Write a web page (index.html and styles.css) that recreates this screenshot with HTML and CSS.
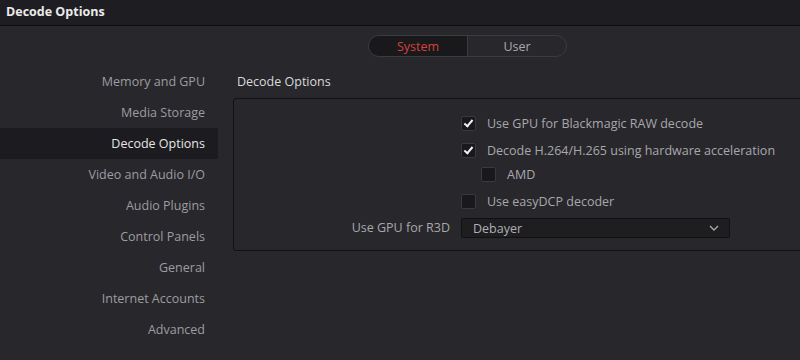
FILE: index.html
```html
<!DOCTYPE html>
<html lang="en">
  <head>
    <meta charset="UTF-8" />
    <meta name="viewport" content="width=device-width, initial-scale=1.0" />
    <title>Decode Options</title>
    <link rel="stylesheet" href="styles.css">
  </head>
  <body>
    <!-- Barra de título -->
    <div class="titlebar">Decode Options</div>

    <!-- Alternador System / User -->
    <div class="switch-row">
      <div class="switch">
        <button class="switch-btn active">System</button>
        <button class="switch-btn">User</button>
      </div>
    </div>

    <div class="main">
      <!-- Menu lateral -->
      <ul class="sidebar">
        <li>Memory and GPU</li>
        <li>Media Storage</li>
        <li class="selected">Decode Options</li>
        <li>Video and Audio I/O</li>
        <li>Audio Plugins</li>
        <li>Control Panels</li>
        <li>General</li>
        <li>Internet Accounts</li>
        <li>Advanced</li>
      </ul>

      <!-- Conteúdo -->
      <div class="content">
        <div class="section-title">Decode Options</div>
        <div class="panel">
          <div class="label"></div>
          <label class="check"><span class="box checked"></span>Use GPU for Blackmagic RAW decode</label>

          <div class="label"></div>
          <label class="check"><span class="box checked"></span>Decode H.264/H.265 using hardware acceleration</label>

          <div class="label sub"></div>
          <label class="check sub indent"><span class="box"></span>AMD</label>

          <div class="label"></div>
          <label class="check"><span class="box"></span>Use easyDCP decoder</label>

          <div class="label">Use GPU for R3D</div>
          <div class="select">
            <span>Debayer</span>
            <svg width="10" height="6" viewBox="0 0 10 6"><path d="M1 1 L5 5 L9 1" fill="none" stroke="#a9a9ad" stroke-width="1.4"/></svg>
          </div>
        </div>
      </div>
    </div>
  </body>
</html>
```

FILE: styles.css
```css
/* Estilos gerais */
body {
  margin: 0;
  width: 800px;
  height: 360px;
  overflow: hidden;
  background-color: #28272c;
  font-family: "Open Sans", "Noto Sans", sans-serif;
  font-size: 12.5px;
  color: #a8a8ac;
}

/* Barra de título */
.titlebar {
  height: 25px;
  line-height: 24px;
  padding-left: 6px;
  background-color: #1e1d21;
  border-bottom: 1px solid #0c0c0e;
  color: #ebebeb;
  font-weight: bold;
}

/* Alternador */
.switch-row {
  padding: 9px 0 0 368px;
}

.switch {
  display: flex;
  width: 197px;
  height: 20px;
  border: 1px solid #3c3c40;
  border-radius: 11px;
  overflow: hidden;
}

.switch-btn {
  flex: 1;
  border: none;
  background: transparent;
  font-family: inherit;
  font-size: 12.5px;
  color: #a9a9ad;
  padding: 0;
}

.switch-btn.active {
  background-color: #19191c;
  color: #d4423c;
  border-right: 1px solid #3c3c40;
}

/* Área principal */
.main {
  display: flex;
  margin-top: 9px;
}

.sidebar {
  flex-shrink: 0;
  list-style: none;
  margin: 0;
  padding: 0;
  width: 218px;
}

.sidebar li {
  height: 31px;
  line-height: 31px;
  text-align: right;
  padding-right: 13px;
  color: #9d9da1;
}

.sidebar li.selected {
  background-color: #1c1b1f;
  color: #e6e6e6;
}

.content {
  flex-shrink: 0;
  padding-left: 15px;
}

.section-title {
  height: 32px;
  line-height: 32px;
  padding-left: 4px;
  color: #dadada;
}

/* Caixa de opções */
.panel {
  display: grid;
  grid-template-columns: 216px 1fr;
  column-gap: 11px;
  row-gap: 3px;
  width: 580px;
  padding: 12px 0 10px;
  border: 1px solid #111113;
  border-radius: 3px;
}

.label {
  height: 24px;
  line-height: 24px;
  text-align: right;
}

.label.sub {
  margin-top: -3px;
}

.check {
  display: flex;
  align-items: center;
  height: 24px;
  gap: 11px;
}

.check.sub {
  margin-top: -3px;
}

.indent {
  margin-left: 20px;
}

.box {
  position: relative;
  width: 13px;
  height: 13px;
  background-color: #19191c;
  border: 1px solid #3a3a3e;
  border-radius: 2px;
}

.box.checked::after {
  content: "";
  position: absolute;
  left: 4px;
  top: 1px;
  width: 3px;
  height: 7px;
  border: solid #f2f2f2;
  border-width: 0 2px 2px 0;
  transform: rotate(40deg);
}

.select {
  display: flex;
  align-items: center;
  justify-content: space-between;
  align-self: center;
  width: 246px;
  height: 18px;
  padding: 0 10px 0 11px;
  background-color: #1e1e21;
  border: 1px solid #111113;
  border-radius: 2px;
  color: #b0b0b4;
}
```
